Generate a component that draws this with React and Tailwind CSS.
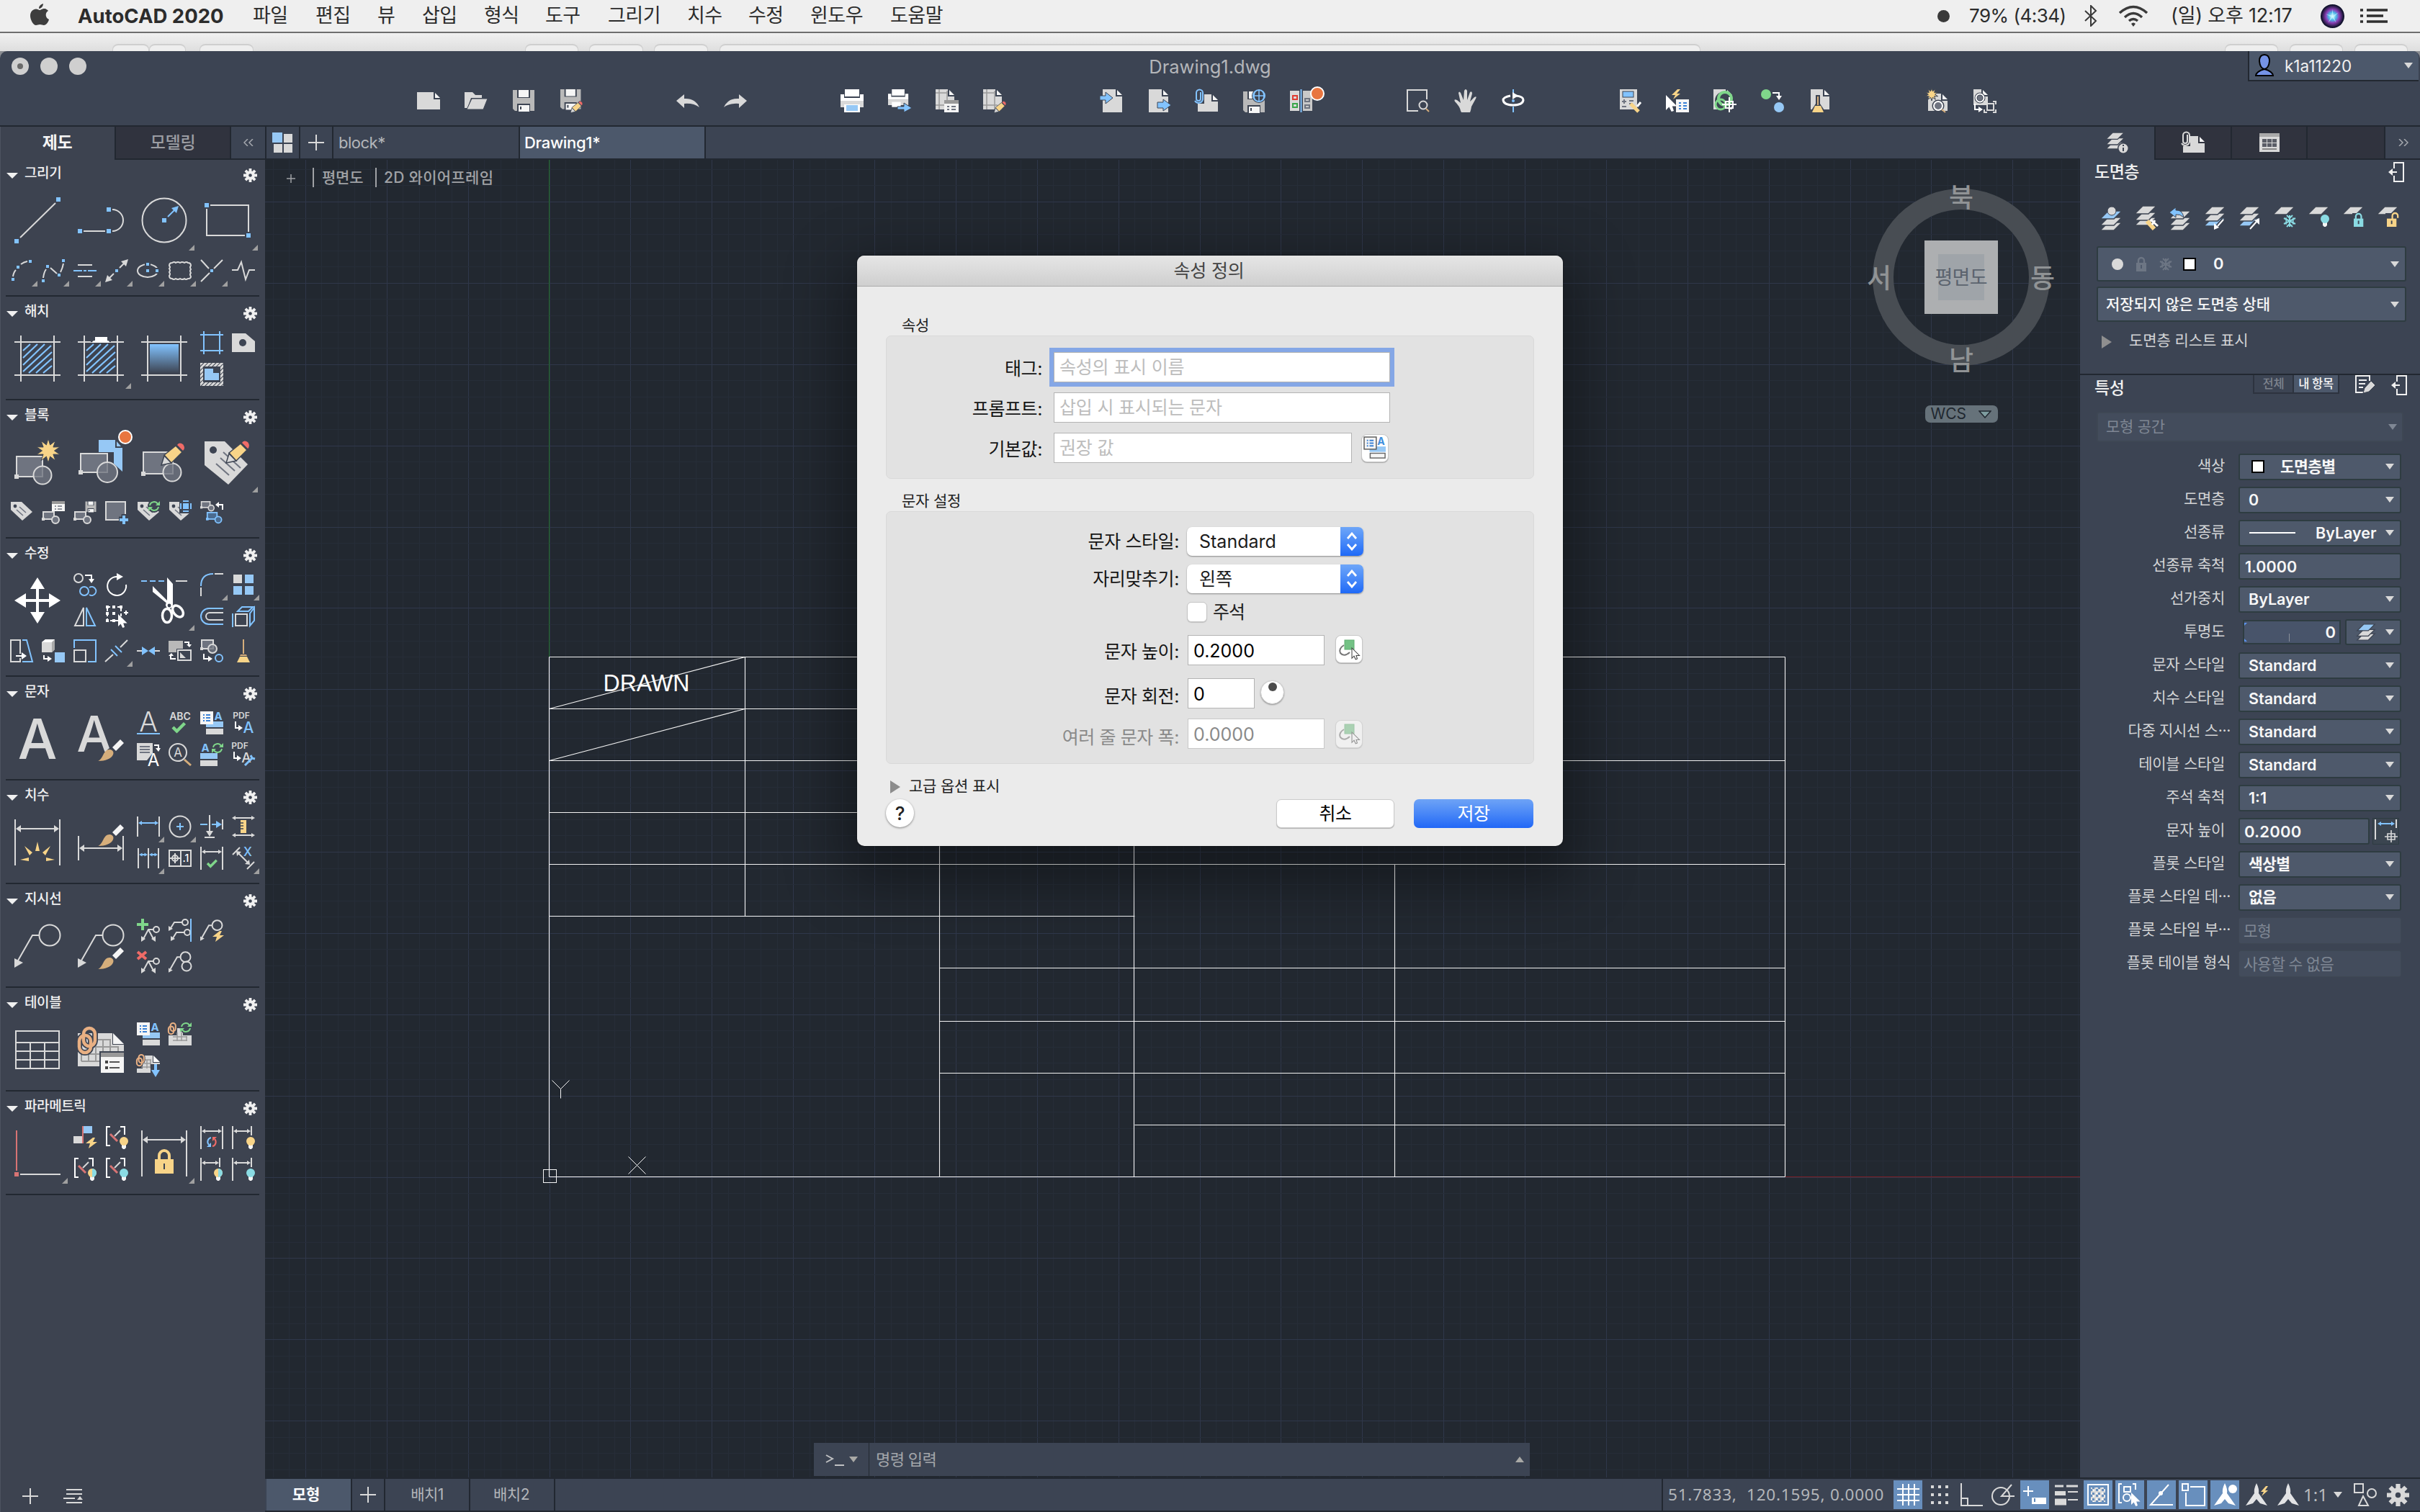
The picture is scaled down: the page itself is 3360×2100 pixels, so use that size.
import React from "react";

const W = "#d9d9d9";
const B = "#82c3ff";
const F = "#96c8f5";
const Y = "#f8d488";
const T = "#d6ae7b";
const G = "#7fd68a";
const R = "#ef6b67";
const P = "#6f7480";
const D = "#3d4452";
const C = "#8adbe3";
const O = "#e9b083";

/* ---------- icon primitives ---------- */
const S = ({ children, className = "size-8", sw = 2, vb = "0 0 32 32" }) => (
  <svg viewBox={vb} className={`${className} block shrink-0 overflow-visible`} fill="none" stroke={W} strokeWidth={sw}>
    {children}
  </svg>
);
const L = ({ children }) => (
  <S className="size-16" vb="0 0 64 64">{children}</S>
);
const Dot = ({ x, y, s = 4, c = B }) => <rect x={x - s / 2} y={y - s / 2} width={s} height={s} fill={c} stroke="none" />;
const A = ({ x, y, s = 20, c = W, w = 400, t = "A" }) => (
  <text x={x} y={y} fontSize={s} fill={c} stroke="none" fontWeight={w} textAnchor="middle" fontFamily="Inter, sans-serif">{t}</text>
);
const Brush = ({ x = 28, y = 32 }) => (
  <g transform={`translate(${x} ${y})`} stroke="none">
    <path d="M0 31C8 28 7 14 17 15C26 17 22 31 0 31Z" fill={T} />
    <path d="M20 12L31 1L36 6L25 17Z" fill="#f5f5f5" />
  </g>
);
const Pencil = ({ x = 0, y = 0, k = 1 }) => (
  <g transform={`translate(${x} ${y}) scale(${k})`} stroke={D} strokeWidth="1.5">
    <path d="M0 32L4 19L14 29Z" fill={W} />
    <path d="M4 18L20 5L29 14L14 29Z" fill={Y} />
    <path d="M21 4Q25 -2 31 3Q35 9 30 13Z" fill={R} />
  </g>
);
const Bulb = ({ x, y, c = Y, half }) => (
  <g stroke="none">
    <path d={`M${x - 3} ${y + 5}h6v4l-2 2h-2l-2-2z`} fill="#f5f5f5" />
    <circle cx={x} cy={y} r="6" fill={c} />
    {half && <path d={`M${x} ${y - 6}a6 6 0 0 1 0 12z`} fill={half} />}
  </g>
);
const Refresh = ({ x, y, r = 6, a = G, b = G }) => (
  <g strokeWidth="2">
    <path d={`M${x - r} ${y - 1}A${r} ${r} 0 0 1 ${x + r - 1} ${y - 3}`} stroke={a} />
    <path d={`M${x + r} ${y + 1}A${r} ${r} 0 0 1 ${x - r + 1} ${y + 3}`} stroke={b} />
    <path d={`M${x + r + 2} ${y - 7}v6h-6z`} fill={a} stroke="none" />
    <path d={`M${x - r - 2} ${y + 7}v-6h6z`} fill={b} stroke="none" />
  </g>
);
/* pair of vertical half-turn arrows, left one and right one in their own colours */
const Swap = ({ x, y }) => (
  <g strokeWidth="2">
    <path d={`M${x - 1} ${y - 6}A6 6 0 0 0 ${x - 4} ${y + 4}`} stroke={B} />
    <path d={`M${x + 1} ${y + 6}A6 6 0 0 0 ${x + 4} ${y - 4}`} stroke={R} />
    <path d={`M${x - 7} ${y + 7}h6v-6z`} fill={B} stroke="none" />
    <path d={`M${x + 7} ${y - 7}h-6v6z`} fill={R} stroke="none" />
  </g>
);
const HArrow = ({ x1, x2, y, c = W, s = 4 }) => (
  <g>
    <path d={`M${x1 + s} ${y}H${x2 - s}`} stroke={c} />
    <path d={`M${x1} ${y}l${s + 2} ${-s}v${2 * s}zM${x2} ${y}l${-s - 2} ${-s}v${2 * s}z`} fill={c} stroke="none" />
  </g>
);
const Check = ({ x, y, k = 1 }) => <path d={`M${x} ${y}l${5 * k} ${5 * k}l${10 * k} ${-10 * k}`} stroke={G} strokeWidth={4 * k} />;
const Bolt = ({ x, y }) => <path d={`M${x + 10} ${y}l-10 8h6l-2 7l12-9h-6l3-6z`} fill={Y} stroke="none" />;
const BlockShape = ({ x = 0, y = 0, c = W, f = P }) => (
  <g transform={`translate(${x} ${y})`} stroke={c}>
    <rect x="2" y="1" width="15" height="10" fill={f} />
    <circle cx="19" cy="12" r="5" fill={f} />
    <Dot x={2} y={11} c={c} />
  </g>
);
const Tag = ({ lines = true }) => (
  <g>
    <path d="M1 1H16L31 15L17 27L1 12Z" fill={W} stroke="none" />
    <circle cx="7" cy="7" r="2.4" fill={D} stroke="none" />
    {lines && <path d="M13 8l9 8M9 12l9 8" stroke={P} strokeWidth="1.6" />}
  </g>
);
const Floppy = ({ x = 0, y = 0, k = 1 }) => (
  <g transform={`translate(${x} ${y}) scale(${k})`} stroke="none">
    <path d="M1 1H31V30H4L1 27Z" fill="#b9b9b9" />
    <rect x="7" y="0" width="18" height="12" fill={D} />
    <rect x="9" y="1" width="14" height="10" fill="#f5f5f5" />
    <rect x="7" y="20" width="18" height="11" fill={D} />
    <rect x="9" y="22" width="15" height="9" fill="#f5f5f5" />
    <rect x="11" y="24" width="2" height="4" fill={D} />
  </g>
);
const Star = ({ x, y, r }) => {
  const pts = Array.from({ length: 20 }, (_, i) => {
    const q = i % 2 ? r * 0.5 : r;
    const t = (i * Math.PI) / 10 - Math.PI / 2;
    return `${(x + q * Math.cos(t)).toFixed(1)},${(y + q * Math.sin(t)).toFixed(1)}`;
  }).join(" ");
  return <polygon points={pts} fill={Y} stroke={D} strokeWidth="1" />;
};
const Sheet = ({ x = 2, y = 0, w = 26, h = 32, c = W }) => (
  <g stroke="none">
    <path d={`M${x} ${y}h${w - 9}v10h9v${h - 10}h${-w}z`} fill={c} />
    <path d={`M${x + w - 7} ${y + 1}l7 7h-7z`} fill="#f5f5f5" />
  </g>
);
const Clip = ({ x, y, k = 1, c = W }) => (
  <path transform={`translate(${x} ${y}) scale(${k})`} d="M9 4V13a3 3 0 0 1-6 0V5a4 4 0 0 1 9 0V14a6 6 0 0 1-11 2" stroke={c} strokeWidth="2" />
);
const Chain = ({ x = 0, y = 0, k = 1 }) => {
  const links = (
    <>
      <rect x="8" y="2" width="16" height="25" rx="8" />
      <rect x="2" y="12" width="16" height="24" rx="8" />
    </>
  );
  return (
    <g transform={`translate(${x} ${y}) scale(${k})`}>
      <g stroke={D} strokeWidth="8">{links}</g>
      <g stroke={O} strokeWidth="4.5">{links}</g>
    </g>
  );
};
const ListField = ({ d }) => (
  <g stroke="none">
    <rect x="8" y="14" width="24" height="8" fill={F} />
    <rect x="8" y="24" width="24" height="8" fill={W} />
    <rect x="0" y="0" width="18" height="18" fill="#f5f5f5" stroke={d || D} strokeWidth={d ? 1.5 : 0} />
    <path d="M4 5h2M4 9h2M4 13h2M8 5h6M8 9h6M8 13h6" stroke="#3b82d6" strokeWidth="2" />
    <A x={25} y={12} s={15} c={d ? "#3f8fdd" : B} w={700} />
  </g>
);
const Leader = ({ x = 0, y = 0, k = 1 }) => (
  <g transform={`translate(${x} ${y}) scale(${k})`} strokeWidth={2 / k}>
    <circle cx="49" cy="17" r="14.5" />
    <path d="M34 17H25L5 52" />
    <path d="M0 49V62L12 55Z" fill={W} stroke="none" />
  </g>
);
const MiniLeader = ({ x = 0, y = 0 }) => (
  <g transform={`translate(${x} ${y})`}>
    <circle cx="23" cy="5" r="4" />
    <path d="M19 5H8L3 13" />
    <path d="M0 17V10L6 14Z" fill={W} stroke="none" />
  </g>
);
const TwoLeader = () => (
  <g>
    <circle cx="27" cy="15" r="4" />
    <path d="M23 15H16L9 28M16 15L23 28" />
    <path d="M6 32v-8l6 4zM26 32v-8l-6 4z" fill={W} stroke="none" />
  </g>
);
const Constraint = () => (
  <g>
    <path d="M7 1H2V27H7M21 1H27V12" stroke="#fff" />
    <path d="M7 11L17 21" stroke="#d87474" strokeWidth="3" />
    <path d="M13 14L21 6" />
  </g>
);
const Layer = ({ x = 0, y = 0, c = W }) => <path d={`M${x + 11} ${y}h19l-11 11h-19z`} fill={c} stroke={D} strokeWidth="1.5" />;
const Stack = ({ a = W, b = W, c = W, y = 0 }) => (
  <g>
    <Layer y={y + 16} c={c} />
    <Layer y={y + 9} c={b} />
    <Layer y={y} c={a} />
  </g>
);
const Lock = ({ x, y, c, open, k = 1, d = D }) => (
  <g transform={`translate(${x} ${y}) scale(${k})`}>
    <path d={open ? "M8 9V4a4 4 0 0 1 8 0v3" : "M3 9V5a4 4 0 0 1 8 0v4"} stroke={c} strokeWidth="2.4" />
    <rect x="0" y="8" width="14" height="12" fill={c} stroke="none" />
    <path d="M7 11v5" stroke={d} strokeWidth="2" />
  </g>
);
const Snow = ({ x, y, c, r = 8 }) => (
  <g stroke={c} strokeWidth="2">
    <path d={`M${x} ${y - r}v${2 * r}M${x - r} ${y - r / 2}l${r * 2} ${r}M${x - r} ${y + r / 2}l${r * 2} ${-r}`} />
    <path d={`M${x - r / 2} ${y - r}l${r / 2} ${r / 2}l${r / 2} ${-r / 2}M${x - r / 2} ${y + r}l${r / 2} ${-r / 2}l${r / 2} ${r / 2}`} />
    <path d={`M${x - r * 0.6} ${y - r * 0.6}v${r * 1.2}M${x + r * 0.6} ${y - r * 0.6}v${r * 1.2}`} strokeWidth="1.500" />
  </g>
);
const Cursor = ({ x, y, c = "#fff", s = "none", k = 1 }) => (
  <path transform={`translate(${x} ${y}) scale(${k})`} d="M0 0V19L4 15L7 21L10 20L8 14H14Z" fill={c} stroke={s} strokeWidth="1.4" />
);
const Caret = ({ c = "#d9d9d9" }) => (
  <svg viewBox="0 0 12 8" className="block h-[8px] w-[12px] shrink-0"><path d="M0 0H12L6 8Z" fill={c} /></svg>
);
const Gear = ({ className = "size-[19px]", c = "#f0f0f0", bg = D }) => (
  <svg viewBox="0 0 20 20" className={`${className} block shrink-0`}>
    <g stroke={c} strokeWidth="4">
      <path d="M10 0V20M0 10H20M3 3L17 17M17 3L3 17" />
    </g>
    <circle cx="10" cy="10" r="6.6" fill={c} />
    <circle cx="10" cy="10" r="2.4" fill={bg} />
  </svg>
);
const Badge = ({ x, y, r = 9 }) => <circle cx={x} cy={y} r={r} fill="#e8753f" stroke="#fff" strokeWidth="2" />;
const Frame = () => <path d="M9 0V64M55 0V64M0 9H64M0 55H64" />;
const HatchLines = () => (
  <g stroke={B} strokeWidth="2.2">
    <path d="M12 21L22 12M12 31L32 12M12 41L42 12M12 50L51 14M20 52L52 23M30 52L52 32M40 52L52 42" />
  </g>
);
const Dim = ({ c = W, x2 = 31 }) => (
  <g>
    <path d={`M1 0V32M${x2} 0V${x2 > 28 ? 32 : 13}`} />
    <HArrow x1={2} x2={x2 - 1} y={7} c={c} s={3} />
  </g>
);

/* ---------- left tool palette ---------- */
const sections = [
  {
    title: "그리기", tall: true,
    icons: [
      { big: 1, el: <L><path d="M8 56L57 8" /><Dot x={3} y={61} s={6} /><Dot x={61} y={3} s={6} /></L> },
      { big: 1, el: <L><path d="M8 47H38M48 17A15 15 0 0 1 48 47" /><Dot x={3} y={47} s={6} /><Dot x={43} y={47} s={6} /><Dot x={43} y={17} s={6} /></L> },
      { big: 1, fly: 1, el: <L><circle cx="32" cy="32" r="30.5" /><Dot x={32} y={32} s={6} /><path d="M37 27L47 17" stroke={B} /><path d="M52 12L42 15L49 22Z" fill={B} stroke="none" /></L> },
      { big: 1, fly: 1, el: <L><path d="M8 11H61V48M56 53H3V16" /><Dot x={3} y={11} s={6} /><Dot x={61} y={53} s={6} /></L> },
      { fly: 1, el: <S><path d="M4 24Q5 18 8 15M15 7Q19 4 24 3" /><Dot x={4} y={28} /><Dot x={11} y={11} /><Dot x={28} y={3} /></S> },
      { fly: 1, el: <S><path d="M2 26Q3 18 6 14M12 12L21 20M26 18Q29 12 30 6" /><Dot x={2} y={30} /><Dot x={8} y={10} /><Dot x={24} y={22} /><Dot x={30} y={2} /></S> },
      { fly: 1, el: <S><path d="M6 8H26M6 24H26" /><path d="M0 16H12M14 16H18M20 16H32" stroke={B} /></S> },
      { fly: 1, el: <S><path d="M4 28L12 20M20 12L28 4" /><path d="M32 0L22 3L29 10ZM0 32L3 22L10 29Z" fill={W} stroke="none" /><Dot x={16} y={16} /></S> },
      { fly: 1, el: <S><ellipse cx="15" cy="16" rx="14" ry="9" /><rect x="11" y="3" width="8" height="8" fill={D} stroke="none" /><rect x="24" y="12" width="8" height="8" fill={D} stroke="none" /><Dot x={15} y={7} /><Dot x={15} y={16} /><Dot x={28} y={16} /></S> },
      { fly: 1, el: <S><path d="M5 5q3-2 5 0q3-2 6 0q3-2 6 0q3-2 5 0q4 0 4 4q-2 2 0 5q-2 2 0 5q-2 2 0 5q0 3-4 3q-3 2-5 0q-3 2-6 0q-3 2-6 0q-3 2-5 0q-4 0-4-4q2-2 0-5q2-2 0-5q2-2 0-4q0-4 4-4Z" /></S> },
      { fly: 1, el: <S><path d="M1 1L12 13M31 1L19 13M13 19L1 31" /><Dot x={16} y={16} /></S> },
      { el: <S><path d="M0 15H8L13 4L19 28L24 15H32" /></S> },
    ],
  },
  {
    title: "해치",
    icons: [
      { big: 1, el: <L><Frame /><HatchLines /></L> },
      { big: 1, fly: 1, el: <L><Frame /><HatchLines /><path d="M18 4V2H46V9H18Z" fill={D} stroke="none" /><path d="M24 2H41V7Q44 7 44 10H20Q20 7 24 7Z" fill="#fff" stroke="none" /></L> },
      { big: 1, el: <L><defs><linearGradient id="grad" x1="0" y1="0" x2="0" y2="1"><stop offset="0" stopColor={B} /><stop offset="1" stopColor={D} /></linearGradient></defs><Frame /><rect x="12" y="12" width="40" height="40" fill="url(#grad)" stroke="none" /></L> },
      { el: <S><path d="M5 0V32M27 0V32M0 5H32M0 27H32" stroke={B} /></S> },
      { el: <S><path d="M0 3H19L32 14V29H0Z" fill={W} stroke="none" /><circle cx="15" cy="16" r="5" fill={D} stroke="none" /></S> },
      { el: <S><defs><pattern id="hp" width="4" height="4" patternUnits="userSpaceOnUse" patternTransform="rotate(45)"><rect width="2" height="4" fill={W} /></pattern></defs><rect width="32" height="32" fill="url(#hp)" stroke="none" /><rect x="4" y="5" width="24" height="22" fill={D} stroke="none" /><path d="M6 8H18V14H26V24H6Z" fill={F} stroke="none" /></S> },
    ],
  },
  {
    title: "블록", tall: true,
    icons: [
      { big: 1, el: <L><rect x="3" y="24" width="36" height="28" fill={P} /><circle cx="39" cy="50" r="12.5" fill={P} fillOpacity=".8" /><Dot x={3} y={52} s={6} c={W} /><Star x={47} y={16} r={17} /></L> },
      { big: 1, el: <L><path d="M29 1H52V12H62V45L50 34V18H29Z" fill={F} stroke="none" /><path d="M54 3L60 10H54Z" fill={F} stroke="none" /><rect x="4" y="20" width="37" height="26" fill={P} /><circle cx="41" cy="46" r="14" fill={P} fillOpacity=".8" /><Dot x={4} y={46} s={6} c={W} /><Badge x={66} y={-3} /></L> },
      { big: 1, el: <L><rect x="3" y="18" width="41" height="30" fill={P} /><circle cx="43" cy="46" r="12.5" fill={P} fillOpacity=".8" /><Dot x={3} y={48} s={6} c={W} /><Pencil x={28} y={4} /></L> },
      { big: 1, fly: 1, el: <L><path d="M0 3H28L60 35L33 63L0 36Z" fill={W} stroke="none" /><circle cx="12" cy="15" r="5" fill={D} stroke="none" /><path d="M26 18L50 40M22 26L42 44M16 34L34 50" stroke={P} /><Pencil x={30} y={1} /></L> },
      { el: <S><Tag /></S> },
      { el: <S><BlockShape x={0} y={14} /><rect x="14" y="0" width="18" height="14" fill="#f5f5f5" stroke="none" /><rect x="14" y="0" width="18" height="4" fill="#999" stroke="none" /><path d="M18 7h2M22 7h6M18 11h2M22 11h6" stroke={P} strokeWidth="1.6" /></S> },
      { el: <S><BlockShape x={0} y={14} /><Floppy x={16} y={0} k={0.5} /></S> },
      { el: <S><rect x="1" y="1" width="27" height="25" fill={P} /><path d="M26 18v14M19 25h14" stroke={D} strokeWidth="7" /><path d="M26 20v12M20 26h12" stroke={B} strokeWidth="4" /></S> },
      { el: <S><Tag /><circle cx="24" cy="7" r="9" fill={D} stroke="none" /><Refresh x={24} y={7} r={6} /></S> },
      { el: <S><Tag /><rect x="15" y="0" width="18" height="17" fill={D} stroke="none" /><rect x="20" y="3" width="8" height="8" fill={B} stroke="none" /><path d="M17 3v8M31 3v8M20 0h8M20 14h8" stroke={B} /></S> },
      { el: <S><g transform="scale(.8)"><BlockShape /></g><g transform="translate(8 15) scale(.9)"><BlockShape c={B} f="#4a6b90" /></g><path d="M31 12V5H25" stroke="#fff" /><path d="M21 5l5-4v8z" fill="#fff" stroke="none" /></S> },
    ],
  },
  {
    title: "수정", tall: true,
    icons: [
      { big: 1, el: <L><path d="M32 8V56M8 32H56" stroke="#fff" strokeWidth="4" /><path d="M32 0L42 16H22ZM32 64L42 48H22ZM0 32L16 22V42ZM64 32L48 22V42Z" fill="#fff" stroke="none" /></L> },
      { el: <S><circle cx="7" cy="7" r="6" /><circle cx="15" cy="25" r="6" stroke={B} /><path d="M22 20A6 6 0 1 1 22 30" stroke={B} /><path d="M16 3H25V9" stroke="#fff" /><path d="M21 8h8l-4 6z" fill="#fff" stroke="none" /></S> },
      { el: <S><path d="M29 16A13 13 0 1 1 17 5" stroke="#fff" /><path d="M16 0L25 5L16 10Z" fill="#fff" stroke="none" /></S> },
      { big: 1, fly: 1, el: <L><path d="M0 5H8M12 5H20M24 5H32" stroke={B} /><path d="M48 5H64" /><path d="M36 0L44 9V38H38L16 20V12L36 32Z" fill="#fff" stroke="none" /><circle cx="39" cy="38" r="5" fill="#fff" stroke="none" /><ellipse cx="36" cy="53" rx="6.5" ry="9.5" stroke="#fff" strokeWidth="3.5" /><ellipse cx="51" cy="47" rx="6" ry="9" transform="rotate(-40 51 47)" stroke="#fff" strokeWidth="3.5" /><circle cx="39" cy="39" r="2.4" fill={D} stroke="none" /></L> },
      { fly: 1, el: <S><path d="M1 18Q1 1 18 1" stroke={B} /><path d="M20 1H32M1 20V32" /></S> },
      { fly: 1, el: <S><Dot x={8} y={8} s={12} c={W} /><Dot x={24} y={8} s={12} c={F} /><Dot x={8} y={24} s={12} c={F} /><Dot x={24} y={24} s={12} c={F} /></S> },
      { el: <S><path d="M14 4V29H2Z" /><path d="M18 4L30 29H18Z" stroke={B} /></S> },
      { el: <S><rect x="3" y="3" width="19" height="19" strokeDasharray="4 3" stroke="#fff" />{[3, 12, 22].map((i) => <g key={i}><Dot x={i} y={3} c="#fff" /><Dot x={i} y={22} c="#fff" /></g>)}<Dot x={3} y={12} c="#fff" /><Dot x={12} y={12} c="#fff" /><path d="M26 11h6M29 8v6" stroke="#fff" /><Cursor x={18} y={13} k={0.9} /></S> },
      { el: <S><path d="M32 5H12A11 11 0 0 0 12 27H32" stroke={B} /><path d="M32 11H13A5 5 0 0 0 13 21H32" /></S> },
      { el: <S><rect x="5" y="13" width="16" height="16" /><path d="M1 12V31M8 9L14 3H29L23 9ZM25 12L31 4V22L25 29Z" stroke={B} /></S> },
      { el: <S><path d="M14 20V1H1V31H14V26" /><path d="M17 1H23L31 31H17" stroke={B} /><path d="M8 23H17" stroke="#fff" /><path d="M16 18l7 5-7 5z" fill="#fff" stroke="none" /></S> },
      { el: <S><path d="M0 4L5 0H18V14L14 18H0Z" fill={W} stroke="none" /><path d="M0 4L5 0H18L14 4Z" fill="#fff" stroke="none" /><path d="M14 18V4L18 0V14Z" fill="#aaa" stroke="none" /><Dot x={25} y={25} s={14} c={F} /><path d="M3 22V27H9" stroke="#fff" /><path d="M8 23l6 4-6 4z" fill="#fff" stroke="none" /></S> },
      { el: <S><path d="M1 12V1H31V31H20" stroke={B} /><rect x="1" y="15" width="16" height="16" /></S> },
      { fly: 1, el: <S><path d="M0 31L11 21M21 11L31 1" /><path d="M8 14L17 23M14 9L23 18" stroke={B} /></S> },
      { el: <S><path d="M0 16H8M24 16H32" /><path d="M7 10V22L16 16ZM25 10V22L16 16Z" fill={B} stroke="none" /></S> },
      { el: <S><rect x="0" y="2" width="20" height="16" fill="#b9b9b9" stroke="none" /><rect x="11" y="13" width="22" height="18" fill={D} stroke="none" /><rect x="13" y="15" width="18" height="14" /><path d="M16 18V26H24Z" fill={W} stroke="none" /><path d="M22 4H28V7M10 27H3V23" stroke="#fff" /><path d="M25 7h7l-3 4zM0 23h7l-3-4z" fill="#fff" stroke="none" /></S> },
      { el: <S><rect x="2" y="1" width="16" height="12" fill={P} /><circle cx="17" cy="13" r="6" fill={P} fillOpacity=".8" /><Dot x={2} y={13} c={W} /><circle cx="26" cy="26" r="5" stroke={B} /><path d="M5 20V27H12" stroke="#fff" /><path d="M11 23l6 4-6 4z" fill="#fff" stroke="none" /></S> },
      { el: <S><path d="M16 0V20" stroke={T} /><path d="M12 21H20L21 23H11Z" fill={T} stroke="none" /><path d="M11 24H21L25 32H7Z" fill={Y} stroke="none" /></S> },
    ],
  },
  {
    title: "문자",
    icons: [
      { big: 1, el: <L><A x={32} y={60} s={77} w={500} /></L> },
      { big: 1, el: <L><A x={23} y={50} s={69} w={500} /><circle cx="48" cy="53" r="9" fill={D} stroke="none" /><Brush x={28} y={32} /></L> },
      { el: <S><A x={16} y={28} s={38} w={300} /><path d="M0 31H32" stroke={B} /></S> },
      { el: <S><A x={16} y={12} s={14} w={600} t="ABC" /><Check x={6} y={22} k={1.1} /></S> },
      { el: <S><ListField /></S> },
      { el: <S><A x={13} y={10} s={12} w={600} t="PDF" /><path d="M5 14V23H10" stroke="#fff" /><path d="M9 19l6 4-6 4z" fill="#fff" stroke="none" /><A x={23} y={30} s={21} c={B} w={500} /></S> },
      { el: <S><path d="M0 0H22V14L14 24H0Z" fill={W} stroke="none" /><path d="M4 5H18M4 9H18M4 13H18" stroke={P} /><path d="M24 3H30V7" stroke="#fff" /><path d="M26 7h7l-3 5z" fill="#fff" stroke="none" /><A x={23} y={32} s={24} c="#fff" /></S> },
      { el: <S><path d="M22 23L31 31" stroke={T} strokeWidth="3" /><circle cx="13" cy="13" r="12" /><A x={13} y={19} s={17} /></S> },
      { el: <S><rect x="0" y="14" width="24" height="8" fill={F} stroke="none" /><rect x="0" y="24" width="24" height="8" fill={W} stroke="none" /><A x={7} y={12} s={15} c={B} w={700} /><Refresh x={24} y={7} r={6} /></S> },
      { el: <S><A x={11} y={8} s={12} w={600} t="PDF" /><path d="M3 12V21H8" stroke="#fff" /><path d="M7 17l6 4-6 4z" fill="#fff" stroke="none" /><A x={20} y={27} s={19} w={500} /><path d="M18 31L28 21M26 17l2 4l4 1" stroke={B} strokeWidth="3" /></S> },
    ],
  },
  {
    title: "치수",
    icons: [
      { big: 1, el: <L><path d="M1 0V64M63 0V64" /><HArrow x1={2} x2={62} y={13} s={5} /><g fill={Y} stroke="none"><path d="M32 31L35 44H29ZM14 37L25 46L21 50ZM50 37L39 46L43 50ZM8 56L20 53V58ZM56 56L44 53V58Z" /></g></L> },
      { big: 1, el: <L><path d="M1 23V57M63 23V57" /><HArrow x1={2} x2={62} y={40} s={5} /><Brush x={28} y={6} /></L> },
      { fly: 1, el: <S><path d="M1 2V30M31 2V30" /><HArrow x1={2} x2={30} y={11} c={B} s={3} /></S> },
      { fly: 1, el: <S><circle cx="16" cy="16" r="14.5" /><path d="M11 16H21M16 11V21" stroke={B} /></S> },
      { el: <S><path d="M13 0V24M6 31H20" /><path d="M8 22h10l-5 8z" fill={W} stroke="none" /><path d="M0 13H10M16 13H24" stroke={B} /><path d="M22 8l8 5-8 5z" fill={B} stroke="none" /><path d="M31 6V20" /></S> },
      { el: <S><HArrow x1={0} x2={32} y={4} s={3} /><HArrow x1={0} x2={32} y={28} s={3} /><rect x="12" y="7" width="8" height="18" fill={Y} stroke="none" /><path d="M12 11h4M12 15h4M12 19h4" stroke={D} strokeWidth="1.5" /></S> },
      { fly: 1, el: <S><path d="M2 2V30M16 2V30M30 2V30" /><HArrow x1={3} x2={15} y={11} c={B} s={2.5} /><HArrow x1={17} x2={29} y={11} c={B} s={2.5} /></S> },
      { el: <S><rect x="1" y="5" width="30" height="22" /><path d="M17 5V27M2 16H16M9 9V23" /><circle cx="9" cy="16" r="4" /><A x={24} y={21} s={14} c="#fff" w={500} t=".1" /></S> },
      { el: <S><Dim /><Check x={10} y={23} k={0.85} /></S> },
      { fly: 1, el: <S><path d="M1 11L11 1M21 31L31 21M8 8L22 22" /><path d="M6 6l7 1-6 6zM25 25l-7-1 6-6z" fill={W} stroke="none" /><A x={22} y={13} s={17} c={B} w={500} t="X" /></S> },
    ],
  },
  {
    title: "지시선",
    icons: [
      { big: 1, el: <L><Leader /></L> },
      { big: 1, el: <L><Leader /><circle cx="50" cy="44" r="6" fill={D} stroke="none" /><Brush x={28} y={33} /></L> },
      { el: <S><path d="M0 8H16M8 0V16" stroke={G} strokeWidth="4" /><TwoLeader /></S> },
      { el: <S><MiniLeader /><MiniLeader x={3} y={14} /><path d="M31 0V32" stroke={B} /></S> },
      { el: <S><Leader k={0.48} y={1} /><Bolt x={17} y={17} /></S> },
      { at: "col-start-5 row-start-2", el: <S><path d="M1 2L13 12M13 2L1 12" stroke={R} strokeWidth="4" /><TwoLeader /></S> },
      { at: "col-start-6 row-start-2", el: <S><Leader k={0.48} y={1} /><circle cx="25" cy="22" r="6.500" /></S> },
    ],
  },
  {
    title: "테이블",
    icons: [
      { big: 1, el: <L><path d="M2 6H62V58H2ZM2 22H62M2 34H62M2 46H62M22 22V58M42 22V58" /></L> },
      { big: 1, el: <L><path d="M0 9H48V25H64V55H0Z" fill={W} stroke="none" /><path d="M49 9L64 24H49Z" fill="#f5f5f5" stroke="none" /><path d="M25 18H45V28M15 28H56V36M5 38H30M5 48H30M5 38V48M15 28V48M25 18V48M35 18V36M45 28V36" stroke="#999" /><rect x="30" y="34" width="36" height="32" fill={D} stroke="none" /><rect x="32" y="36" width="32" height="28" fill="#f5f5f5" stroke="none" /><rect x="32" y="36" width="32" height="6" fill="#999" stroke="none" /><path d="M38 49h4M38 57h4" stroke="#444" strokeWidth="4" /><path d="M44 49H58M44 57H58" stroke="#555" /><Chain /></L> },
      { el: <S><ListField /></S> },
      { el: <S><path d="M0 18H12V8H20V18H32V32H0Z" fill={W} stroke="none" /><path d="M6 20H26M6 25H26M12 14V26M18 14V26M25 19V26" stroke="#999" strokeWidth="1.5" /><circle cx="24" cy="7" r="8.5" fill={D} stroke="none" /><Chain x={-1} k={0.45} /><Refresh x={24} y={7} r={6} /></S> },
      { at: "col-start-5 row-start-2", el: <S><path d="M0 20H8V2H22V12H32V26H0Z" fill={W} stroke="none" /><path d="M23 2L32 11H23Z" fill="#fff" stroke="none" /><path d="M10 8H20M10 13H20M6 18H20M14 8V20M19 8V20" stroke="#999" strokeWidth="1.5" /><path d="M19 14H33V30H19Z" fill={D} stroke="none" /><path d="M24 14H28V22H32L26 32L20 22H24Z" fill={B} stroke="none" /><Chain x={-1} k={0.45} /></S> },
    ],
  },
  {
    title: "파라메트릭",
    icons: [
      { big: 1, fly: 1, el: <L><path d="M3 0V56" stroke="#d87474" /><Dot x={3} y={61} s={6} c="#d87474" /><path d="M8 61H64" /></L> },
      { el: <S><rect x="13" y="0" width="13" height="10" fill={F} stroke="none" /><rect x="0" y="14" width="12" height="10" fill={W} stroke="none" /><path d="M13 0V24" stroke="#d87474" /><Bolt x={17} y={16} /></S> },
      { el: <S><Constraint /><Bulb x={26} y={21} /></S> },
      { big: 1, fly: 1, el: <L><path d="M1 0V64M63 0V64" /><HArrow x1={2} x2={62} y={13} s={5} /><path d="M25 42V35A7 7 0 0 1 39 35V42" stroke={Y} strokeWidth="4" /><rect x="19" y="40" width="26" height="20" fill={Y} stroke="none" /><path d="M32 46V54" stroke={D} /></L> },
      { el: <S><Dim /><Swap x={16} y={22} /></S> },
      { el: <S><Dim x2={27} /><Bulb x={26} y={21} /></S> },
      { el: <S><Constraint /><Bulb x={26} y={21} half={C} /></S> },
      { el: <S><Constraint /><Bulb x={26} y={21} c={C} /></S> },
      { el: <S><Dim x2={27} /><Bulb x={25} y={21} half={C} /></S> },
      { el: <S><Dim x2={27} /><Bulb x={26} y={21} c={C} /></S> },
    ],
  },
];

const Fly = ({ big, low }) => (
  <svg viewBox="0 0 8 8" className={`absolute size-2 ${big ? "bottom-[2px] right-[2px]" : low ? "bottom-[4px] right-0" : "bottom-0 right-0"}`}>
    <path d="M8 0V8H0Z" fill="#a0a0a0" />
  </svg>
);

function Section({ s }) {
  let used = 0;
  return (
    <section className={`flex flex-col ${s.tall ? "h-[192px]" : "h-[144px]"}`}>
      <header className="flex h-[42px] shrink-0 items-center pl-[9px] pr-[11px]">
        <svg viewBox="0 0 16 8" className="mt-[6px] h-2 w-4"><path d="M0 0H16L8 8Z" fill="#f0f0f0" /></svg>
        <h3 className="ml-[9px] flex-1 text-[19px] font-medium leading-[24px] tracking-[-0.4px] text-[#f0f0f0]">{s.title}</h3>
        <Gear className="mt-[5px] size-[19px]" />
      </header>
      <div className="grid grid-flow-row-dense auto-rows-[44px] grid-cols-[repeat(8,44px)] pl-2">
        {s.icons.map((ic, i) => {
          const low = s.tall && !ic.big && used >= 16;
          used += ic.big ? 4 : 1;
          return (
            <div
              key={i}
              className={`relative flex items-center justify-center ${ic.at || ""} ${ic.big ? "col-span-2 row-span-2" : low ? "h-[52px]" : ""}`}
            >
              {ic.el}
              {ic.fly && <Fly big={ic.big} low={low} />}
            </div>
          );
        })}
      </div>
      <div className="mx-2 mt-auto h-[2px] shrink-0 bg-[#222831]" />
    </section>
  );
}

function LeftPanel() {
  return (
    <aside className="flex w-[368px] shrink-0 flex-col bg-[#3d4350] shadow-[inset_1px_0_0_#4d5360]">
      <div className="flex h-[44px] shrink-0 text-[23px] font-medium leading-[44px] tracking-[-0.4px]">
        <div className="w-[159px] text-center font-bold text-[#f5f5f5]">제도</div>
        <div className="h-[46px] w-[162px] border-x-2 border-b-2 border-[#222831] bg-[#30333e] text-center text-[#9b9da3]">모델링</div>
        <div className="flex h-[46px] flex-1 items-center justify-center border-b-2 border-[#222831] bg-[#3c4453]">
          <svg viewBox="0 0 14 10" className="h-[10px] w-[14px]" fill="none" stroke="#a5a8ae" strokeWidth="1.5"><path d="M6 0L1 5L6 10M13 0L8 5L13 10" /></svg>
        </div>
      </div>
      {sections.map((s) => <Section key={s.title} s={s} />)}
      <div className="mt-auto flex h-[44px] items-center gap-[34px] pl-[30px]">
        <S className="size-[24px]" vb="0 0 24 24"><path d="M12 1V23M1 12H23" /></S>
        <S className="h-[20px] w-[27px]" vb="0 0 27 20"><path d="M4 1H26M4 7H26M0 13H16M4 19H26" /><path d="M19 15h8l-4-5z" fill={W} stroke="none" /></S>
      </div>
    </aside>
  );
}

/* ---------- macOS menu bar ---------- */
const menus = [
  ["파일", "w-[87px]"], ["편집", "w-[86px]"], ["뷰", "w-[62px]"], ["삽입", "w-[86px]"], ["형식", "w-[85px]"], ["도구", "w-[87px]"],
  ["그리기", "w-[110px]"], ["치수", "w-[85px]"], ["수정", "w-[86px]"], ["윈도우", "w-[111px]"], ["도움말", "w-[90px]"],
];

function MenuBar() {
  return (
    <div className="flex h-[44px] shrink-0 items-center bg-[#efefef] text-[27px] leading-[44px] text-[#2c2c2c]">
      <svg viewBox="0 0 26 31" className="ml-[42px] mt-[-3px] h-[31px] w-[26px]" fill="#3d3d3d">
        <path d="M18 0C18 4 15 7 12 7C12 3 15 1 18 0ZM13 9C15 9 16 7 20 7C22 7 24 9 25 10C20 13 21 20 26 22C25 26 22 30 19 30C17 30 16 29 13.500 29C11 29 10 30 8 30C4 30 0 22 0 17C0 11 4 7.500 8 7.500C10 7.500 12 9 13 9Z" />
      </svg>
      <div className="ml-[40px] w-[243px] text-[27.500px] font-bold tracking-[0px]">AutoCAD 2020</div>
      {menus.map(([t, w]) => <div key={t} className={`${w} mt-[-1px] tracking-[-0.500px]`}>{t}</div>)}
      <div className="ml-auto flex h-[44px] items-center">
        <div className="size-[17px] rounded-full bg-[#3a3a3a]" />
        <div className="ml-[27px] w-[126px] whitespace-nowrap text-[26px] tracking-[-0.5px]">79% (4:34)</div>
        <svg viewBox="0 0 18 30" className="ml-[34px] h-[30px] w-[18px]" fill="none" stroke="#3a3a3a" strokeWidth="2"><path d="M1 8L16 22L9 29V1L16 8L1 22" /></svg>
        <svg viewBox="0 0 42 30" className="ml-[29px] h-[30px] w-[42px]" fill="none" stroke="#3a3a3a" strokeWidth="3.500"><path d="M2 11Q21 -6 40 11M9 17Q21 6 33 17M15 22Q21 17 27 22" /><path d="M18 26Q21 23 24 26L21 30Z" fill="#3a3a3a" stroke="none" /></svg>
        <div className="ml-[31px] w-[178px] whitespace-nowrap text-[27px] tracking-[-0.200px]">(일) 오후 12:17</div>
        <svg viewBox="0 0 32 32" className="ml-[30px] size-[33px]">
          <defs><radialGradient id="siri"><stop offset="0" stopColor="#dffcff" /><stop offset=".35" stopColor="#4bb6e8" /><stop offset=".6" stopColor="#8a3fb5" /><stop offset="1" stopColor="#10122c" /></radialGradient></defs>
          <circle cx="16" cy="16" r="16" fill="#10122c" /><circle cx="16" cy="16" r="15" fill="url(#siri)" />
          <path d="M16 6L17 15L24 11L18 17L21 25L16 18L10 25L14 17L7 13L15 15Z" fill="#c9fbff" opacity=".6" />
        </svg>
        <svg viewBox="0 0 38 20" className="ml-[22px] mr-[45px] h-[20px] w-[38px]" stroke="#2f2f2f" strokeWidth="3.500"><path d="M0 2H4M9 2H38M0 10H4M9 10H32M0 18H4M9 18H38" /></svg>
      </div>
    </div>
  );
}

function BackWindow() {
  const b = "h-[10px] shrink-0 rounded-t-[8px] border-x border-t-2 border-[#cfcfcf] bg-[#eeeeee]";
  return (
    <div className="flex h-[27px] shrink-0 items-end border-t-2 border-[#6f6f6f] bg-gradient-to-b from-[#f1f1f1] to-[#dedede]">
      <div className={`${b} ml-[156px] w-[51px]`} /><div className={`${b} w-[51px]`} /><div className={`${b} ml-[19px] w-[75px]`} />
      <div className={`${b} ml-[377px] w-[74px]`} /><div className={`${b} ml-[15px] w-[75px]`} /><div className={`${b} ml-[15px] w-[75px]`} />
      <div className={`${b} ml-[16px] w-[1362px]`} />
      <div className={`${b} ml-[728px] w-[74px]`} /><div className={`${b} ml-[16px] w-[74px]`} /><div className={`${b} ml-[16px] w-[74px]`} />
    </div>
  );
}

/* ---------- application title and toolbar ---------- */
const Printer = () => (
  <g stroke="none"><rect x="6" y="0" width="20" height="10" fill="#fff" /><path d="M0 7H5V12H27V7H32V16H0Z" fill="#fff" /><path d="M0 16H32V25H0Z" fill={W} /></g>
);
const Plan = () => (
  <g><Sheet x={0} y={0} w={26} h={28} /><path d="M5 0V28M0 5H16M0 22H20M16 2V28" stroke="#999" strokeWidth="1.500" /></g>
);
const toolGroups = [
  [
    <S><Sheet x={0} y={4} w={32} h={24} /></S>,
    <S><path d="M0 4H11L15 8H24V12H9L4 26H0Z" fill={W} stroke="none" /><path d="M10 13H32L26 28H3Z" fill={W} stroke={D} strokeWidth="1" /></S>,
    <S><Floppy /></S>,
    <S><Floppy k={0.95} y={-1} /><Pencil x={15} y={16} k={0.52} /></S>,
  ],
  [
    <S><path d="M0 16L11 7V13Q26 12 32 25Q24 19 11 20V26Z" fill={W} stroke="none" /></S>,
    <S><path d="M32 16L21 7V13Q6 12 0 25Q8 19 21 20V26Z" fill={W} stroke="none" /></S>,
  ],
  [
    <S><Printer /><rect x="5" y="21" width="22" height="11" fill="#fff" stroke="none" /><rect x="8" y="22" width="16" height="8" fill={F} stroke="none" /></S>,
    <S><g transform="scale(.88)"><Printer /><rect x="6" y="20" width="14" height="8" fill="#fff" stroke="none" /></g><path d="M13 24H22V19L33 26L22 32V28H13Z" fill={B} stroke={D} strokeWidth="1" /></S>,
    <S><Plan /><rect x="12" y="15" width="20" height="17" fill="#f5f5f5" stroke="none" /><rect x="12" y="15" width="20" height="5" fill="#999" stroke="none" /><path d="M16 24h3M22 24h6M16 28h3M22 28h6" stroke={P} /></S>,
    <S><Plan /><Pencil x={15} y={16} k={0.52} /></S>,
  ],
  [
    <S><Sheet x={4} y={0} w={27} /><path d="M0 9H8V4L18 12L8 20V15H0Z" fill={B} stroke={D} strokeWidth="1" /></S>,
    <S><Sheet x={2} y={0} w={27} /><path d="M14 18H22V14L33 22L22 30V26H14Z" fill={B} stroke={D} strokeWidth="1" /></S>,
    <S><Sheet x={4} y={7} w={28} h={24} /><rect x="0" y="0" width="13" height="20" fill={D} stroke="none" /><Clip x={-1} y={0} c={B} /></S>,
    <S><Floppy x={0} y={2} /><circle cx="23" cy="9" r="10" fill={D} stroke="none" /><circle cx="23" cy="9" r="8" stroke={B} /><path d="M15 9H31M23 1V17M18 3Q14 9 18 15M28 3Q32 9 28 15" stroke={B} strokeWidth="1.5" /></S>,
    <S><rect x="0" y="2" width="13" height="28" fill={W} stroke="none" /><rect x="18" y="2" width="13" height="28" fill="#c9c9c9" stroke="none" /><path d="M15.500 0V32" stroke={B} /><rect x="4" y="9" width="6" height="5" stroke="#e03c31" /><rect x="4" y="20" width="6" height="5" stroke="#3aa64a" /><rect x="21" y="13" width="6" height="4" stroke={P} /><rect x="21" y="22" width="6" height="4" stroke={P} /><Badge x={38} y={6} /></S>,
  ],
  [
    <S><path d="M28 14V1H1V30H16" /><circle cx="23" cy="22" r="5.500" /><path d="M27 27L31 31" stroke={T} /></S>,
    <S><path d="M9 30Q8 24 1 17Q-1 13 4 15L9 19L6 5Q7 2 9 5L13 15L14 2Q16 -2 18 2L18 15L22 4Q25 2 25 6L22 17L28 11Q32 9 30 13L24 24Q23 30 22 32H10Z" fill={W} stroke="none" /></S>,
    <S><path d="M16 0V8M16 24V32" stroke={B} /><path d="M12 9Q2 11 2 15Q3 22 16 22Q29 22 30 15Q30 10 20 9" stroke="#fff" strokeWidth="3" /><path d="M15 4L23 9L15 14Z" fill="#fff" stroke="none" /><circle cx="16" cy="16" r="2" fill={B} stroke="none" /></S>,
  ],
  [
    <S><rect x="2" y="0" width="24" height="28" fill={W} stroke="none" /><rect x="6" y="3" width="15" height="8" fill={B} stroke={D} strokeWidth="1" /><path d="M5 17h6M8 14v6M15 16h6M15 20h5M5 24h6" stroke={P} /><path d="M17 20L28 31" stroke={Y} strokeWidth="5" /><path d="M26 24L31 18" stroke="#fff" strokeWidth="3" /></S>,
    <S><Cursor x={0} y={8} k={1.100} /><rect x="14" y="14" width="18" height="18" fill="#f5f5f5" stroke="none" /><path d="M18 19h3M18 23h3M18 27h3M24 19h5M24 23h5M24 27h5" stroke="#3b82d6" /><path d="M16 0L8 8H13L10 14L20 6H15L20 0Z" fill={Y} stroke="none" /></S>,
    <S><Sheet x={0} y={0} w={26} h={28} /><circle cx="15" cy="16" r="13" fill={D} stroke="none" /><circle cx="16" cy="13" r="9" stroke={G} strokeWidth="4" /><circle cx="10" cy="21" r="7" stroke={G} strokeWidth="3" /><path d="M12 21H32M22 11V32M17 17H27V26H17Z" stroke="#fff" /></S>,
    <S><circle cx="7" cy="7" r="7" fill={G} stroke="none" /><circle cx="25" cy="25" r="7" fill={F} stroke="none" /><path d="M16 5H25V10" stroke="#fff" /><path d="M21 9h8l-4 6z" fill="#fff" stroke="none" /></S>,
    <S><Sheet x={3} y={0} w={26} h={28} /><path d="M10 8V20L2 32H24L16 20V8Z" fill={D} stroke="none" /><path d="M13 10V22" stroke={T} /><path d="M9 23H17L21 32H5Z" fill={Y} stroke="none" /></S>,
  ],
  [
    <S><Sheet x={4} y={6} w={27} h={24} /><Star x={9} y={7} r={9} /><circle cx="18" cy="23" r="6" fill={P} stroke={D} strokeWidth="5" /><circle cx="18" cy="23" r="6" fill={P} stroke="#fff" /><path d="M23 28L28 32" stroke={T} /></S>,
    <S><Sheet x={1} y={0} w={20} h={22} /><circle cx="10" cy="12" r="5.500" fill={P} stroke={D} strokeWidth="4" /><circle cx="10" cy="12" r="5.500" stroke="#fff" /><path d="M3 20V28H9" stroke="#fff" /><path d="M8 24l6 4-6 4z" fill="#fff" stroke="none" /><rect x="20" y="20" width="9" height="9" /><path d="M16 21V17H20M28 17H32V21M32 28V32H28M20 32H16V28" /></S>,
  ],
];

function AppHeader() {
  return (
    <header className="flex h-[105px] shrink-0 flex-col rounded-t-[10px] border-b-2 border-[#222831] bg-[#3c4453]">
      <div className="grid h-[42px] grid-cols-3 items-center">
        <div className="flex gap-[16px] pl-[16px]">
          <div className="flex size-[24px] items-center justify-center rounded-full bg-[#cfcfcf]"><div className="size-2 rounded-full bg-[#6a6a6a]" /></div>
          <div className="size-[24px] rounded-full bg-[#cfcfcf]" />
          <div className="size-[24px] rounded-full bg-[#cfcfcf]" />
        </div>
        <h1 className="pt-[2px] text-center text-[25.500px] leading-[40px] text-[#b4b6ba]">Drawing1.dwg</h1>
        <div className="mr-[2px] flex h-[42px] w-[237px] items-center justify-self-end rounded-tr-[8px] border-b-2 border-l-2 border-[#222831] bg-[#4c586b] pl-[8px] pr-[8px]">
          <svg viewBox="0 0 26 32" className="h-[32px] w-[26px]" fill="#7593e6" stroke="#000" strokeWidth="2"><path d="M1 30Q2 24 13 21Q24 24 25 30Z" /><path d="M13 1Q20 1 20 10Q19 20 13 21Q7 20 6 10Q6 1 13 1Z" /></svg>
          <div className="ml-[15px] flex-1 pt-[2px] text-[22.500px] text-[#f0f0f0]">k1a11220</div>
          <Caret />
        </div>
      </div>
      <div className="flex gap-[130px] pl-[579px] pt-[11px]">
        {toolGroups.map((g, i) => (
          <div key={i} className="flex gap-[34px]">{g.map((ic, j) => <div key={j}>{ic}</div>)}</div>
        ))}
      </div>
    </header>
  );
}

/* ---------- drawing area ---------- */
const GRID = 112.875;
const X0 = 762.5 - 368;
const Y0 = 1634.5 - 222;
const gx = Array.from({ length: 112 }, (_, i) => i - 17);
const gy = Array.from({ length: 82 }, (_, i) => i - 18);

function Drawing() {
  const fx = (x) => x - 368 + 0.5;
  const fy = (y) => y - 222 + 0.5;
  const lines = [
    [762, 912, 2478, 912], [762, 984, 1400, 984], [762, 1056, 2478, 1056], [762, 1128, 1400, 1128], [762, 1200, 2478, 1200],
    [762, 1272, 1575, 1272], [1304, 1344, 2478, 1344], [1304, 1418, 2478, 1418], [1304, 1490, 2478, 1490], [1575, 1562, 2478, 1562],
    [762, 1634, 2478, 1634], [762, 912, 762, 1634], [1034, 912, 1034, 1272], [1304, 1100, 1304, 1634], [1574, 1100, 1574, 1634],
    [1936, 1200, 1936, 1634], [2478, 912, 2478, 1634], [762, 984, 1034, 912], [762, 1056, 1034, 984],
  ];
  return (
    <svg viewBox="0 0 2520 1830" className="absolute inset-0 h-[1830px] w-[2520px]" fill="none" shapeRendering="auto">
      {gx.map((i) => {
        const x = Math.round(X0 + (i * GRID) / 5) + 0.5;
        return <path key={i} d={`M${x} 0V1830`} stroke={i % 5 ? "#262d38" : "#2f374a"} />;
      })}
      {gy.map((i) => {
        const y = Math.round(Y0 - (i * GRID) / 5) + 0.5;
        return <path key={i} d={`M0 ${y}H2520`} stroke={i % 5 ? "#262d38" : "#2f374a"} />;
      })}
      <path d={`M${fx(762)} 0V${fy(912)}`} stroke="#1f6b27" />
      <path d={`M${fx(2478)} ${fy(1634)}H2520`} stroke="#7c2026" />
      {lines.map(([a, b, c, d], i) => <path key={i} d={`M${fx(a)} ${fy(b)}L${fx(c)} ${fy(d)}`} stroke="#f2f2f2" strokeWidth="1.1" />)}
      <g stroke="#f5f5f5">
        <rect x={fx(754)} y={fy(1624)} width="18" height="18" />
        <path d={`M${fx(766)} ${fy(1500)}l12 12l12 -12M${fx(778)} ${fy(1512)}v13M${fx(872)} ${fy(1606)}l24 24M${fx(896)} ${fy(1606)}l-24 24`} />
      </g>
      <text x={fx(837)} y={fy(959)} fontSize="34" textLength="120" lengthAdjust="spacingAndGlyphs" fill="#fff" fontFamily="Liberation Sans, sans-serif">DRAWN</text>
    </svg>
  );
}

function ViewCube() {
  const dir = { fill: "#909395", fontSize: 37, fontWeight: 500, textAnchor: "middle", fontFamily: "Noto Sans CJK KR, sans-serif" };
  return (
    <div className="absolute left-[2215px] top-[18px] flex w-[280px] flex-col items-center">
      <svg viewBox="0 -10 280 290" className="h-[290px] w-[280px]">
        <circle cx="140" cy="135" r="108.500" fill="none" stroke="#484d53" strokeWidth="29" />
        <rect x="89" y="84" width="102" height="102" fill="#adafb1" />
        <rect x="108" y="103" width="64" height="64" fill="#9fa4a9" />
        <text x="140" y="145" fontSize="27" textLength="73" textAnchor="middle" fill="#5b636e" fontFamily="Noto Sans CJK KR, sans-serif">평면도</text>
        <text {...dir} x="140" y="38">북</text>
        <text {...dir} x="140" y="264">남</text>
        <text {...dir} x="26" y="150">서</text>
        <text {...dir} x="253" y="150">동</text>
      </svg>
      <div className="mt-[33px] flex h-[24px] w-[101px] items-center justify-between rounded-[7px] bg-[#66727a] pl-[8px] pr-[9px] text-[21px] leading-[24px] text-[#20272f]">
        WCS
        <svg viewBox="0 0 18 11" className="h-[11px] w-[18px]" fill="#7f9da0" stroke="#20272f" strokeWidth="1.500"><path d="M1 1H17L9 10Z" /></svg>
      </div>
    </div>
  );
}

function Canvas() {
  return (
    <div className="relative h-[1830px] overflow-hidden bg-[#222830]">
      <Drawing />
      <div className="absolute left-[30px] top-[9px] flex h-[30px] items-center text-[21px] font-medium leading-[30px] tracking-[-0.200px] text-[#a0a2a5]">
        <svg viewBox="0 0 12 12" className="mt-[3px] size-3" stroke="#a0a2a5" strokeWidth="1.500"><path d="M6 0V12M0 6H12" /></svg>
        <div className="ml-[24px] h-[27px] w-[2px] bg-[#a0a2a5]" />
        <div className="ml-[11px] mt-[2px] w-[74px]">평면도</div>
        <div className="h-[27px] w-[2px] bg-[#a0a2a5]" />
        <div className="ml-[10px] mt-[2px] whitespace-nowrap tracking-[0.300px]">2D 와이어프레임</div>
      </div>
      <ViewCube />
      <div className="absolute left-[762px] top-[1782px] flex h-[46px] w-[994px] items-center bg-[#3c4453]">
        <div className="flex h-full w-[77px] items-center gap-[5px] border-r border-[#222831] pl-[16px]">
          <svg viewBox="0 0 28 18" className="mt-[4px] h-[18px] w-[28px]" fill="none" stroke="#c0c1c3" strokeWidth="2"><path d="M1 1L10 6L1 11M13 15H26" /></svg>
          <Caret c="#a9a9a6" />
        </div>
        <div className="flex-1 pl-[9px] text-[22px] leading-[46px] tracking-[-0.600px] text-[#a4a7ab]">명령 입력</div>
        <svg viewBox="0 0 12 8" className="mr-[8px] h-[8px] w-[12px]"><path d="M0 8H12L6 0Z" fill="#a9a9a6" /></svg>
      </div>
    </div>
  );
}

function DocTabs() {
  return (
    <div className="flex h-[46px] shrink-0 items-stretch border-b-2 border-[#222831] bg-[#3c4453] text-[22px] leading-[44px]">
      <div className="flex w-[49px] items-center justify-center border-x-2 border-[#222831] pr-[2px]">
        <S className="size-[28px]" vb="0 0 28 28"><rect x="0" y="0" width="14" height="14" fill={F} stroke="none" /><rect x="16" y="2" width="12" height="12" fill={W} stroke="none" /><rect x="2" y="16" width="12" height="12" fill={W} stroke="none" /><rect x="16" y="16" width="12" height="12" fill={W} stroke="none" /></S>
      </div>
      <div className="flex w-[46px] items-center justify-center border-r-2 border-[#222831]"><S className="size-[22px]" vb="0 0 22 22"><path d="M11 0V22M0 11H22" /></S></div>
      <div className="w-[259px] border-r-2 border-[#222831] pl-[7px] tracking-[-0.500px] text-[#b3b6ba]">block*</div>
      <div className="w-[258px] border-r-2 border-[#222831] bg-[#4c586b] pl-[6px] font-medium tracking-[-0.300px] text-white">Drawing1*</div>
    </div>
  );
}

/* ---------- right inspector ---------- */
const ExitIcon = () => <S className="h-[28px] w-[22px]" vb="0 0 22 28"><path d="M8 9V1H21V27H8V19M5 14H12" strokeWidth="2" stroke="#f0f0f0" /><path d="M0 14l6-5v10z" fill="#f0f0f0" stroke="none" /></S>;
const Swatch = () => <div className="size-[18px] shrink-0 border-2 border-black bg-white" />;
const fieldBase = "flex items-center rounded-[3px] border-2 border-[#2e3c41] bg-[#4e596b] text-[#f7f7f7]";

const layerTools = [
  <S><Stack a={F} y={6} /><circle cx="16" cy="6" r="6" fill={W} stroke={D} strokeWidth="1" /></S>,
  <S><Stack y={-1} /><path d="M17 20L27 31" stroke={Y} strokeWidth="6" /><path d="M22 18L32 27M28 19L24 25" stroke="#fff" strokeWidth="3" /></S>,
  <S><Stack y={6} /><path d="M0 8L9 1V5Q18 4 20 15Q15 10 9 11V15Z" fill={B} stroke={D} strokeWidth="1" /></S>,
  <S><Stack c={F} /><path d="M27 18L17 30" stroke={D} strokeWidth="6" /><path d="M27 18L19 27" stroke="#fff" /><path d="M14 32V23L21 29Z" fill="#fff" stroke="none" /></S>,
  <S><Stack c={F} /><path d="M16 30L27 18" stroke={D} strokeWidth="6" /><path d="M16 31L25 21" stroke="#fff" /><path d="M29 16V25L22 19Z" fill="#fff" stroke="none" /></S>,
  <S><Layer y={0} /><circle cx="23" cy="20" r="10" fill={D} stroke="none" /><Snow x={23} y={20} c={C} /></S>,
  <S><Layer y={0} /><circle cx="24" cy="17" r="8" fill={D} stroke="none" /><Bulb x={24} y={17} c={C} /></S>,
  <S><Layer y={0} /><rect x="14" y="9" width="18" height="22" fill={D} stroke="none" /><Lock x={16} y={9} k={0.95} c={C} /></S>,
  <S><Layer y={0} /><rect x="12" y="9" width="18" height="22" fill={D} stroke="none" /><Lock x={14} y={9} k={0.95} c={Y} open /></S>,
];

const props = [
  { l: "색상", v: "도면층별", pre: "swatch" },
  { l: "도면층", v: "0" },
  { l: "선종류", v: "ByLayer", pre: "line" },
  { l: "선종류 축척", v: "1.0000", text: 1 },
  { l: "선가중치", v: "ByLayer" },
  { l: "투명도", kind: "slider" },
  { l: "문자 스타일", v: "Standard" },
  { l: "치수 스타일", v: "Standard" },
  { l: "다중 지시선 스···", v: "Standard", long: 1 },
  { l: "테이블 스타일", v: "Standard" },
  { l: "주석 축척", v: "1:1" },
  { l: "문자 높이", v: "0.2000", kind: "height" },
  { l: "플롯 스타일", v: "색상별" },
  { l: "플롯 스타일 테···", v: "없음", long: 1 },
  { l: "플롯 스타일 부···", v: "모형", off: 1, long: 1 },
  { l: "플롯 테이블 형식", v: "사용할 수 없음", off: 1, long: 1 },
];

function PropField({ p }) {
  if (p.kind === "slider")
    return (
      <div className="flex w-[226px] items-center justify-between pl-[6px]">
        <div className="relative flex h-[34px] w-[136px] items-center justify-end border-2 border-[#2e3c41] bg-[#48546a] pr-[5px] text-[22px] font-semibold text-[#f7f7f7]">
          <div className="absolute bottom-[2px] left-[62px] h-[11px] w-px bg-[#8a9099]" />
          <svg viewBox="0 0 4 26" className="absolute left-0 top-[2px] h-[26px] w-1" fill="#5c94ee"><path d="M0 0H4L0 4ZM0 26H4L0 22Z" /></svg>
          0
        </div>
        <div className={`${fieldBase} h-[36px] w-[78px] justify-between pl-[14px] pr-[8px]`}>
          <S className="h-[22px] w-[26px]" vb="0 0 30 27"><Stack a={F} /></S><Caret />
        </div>
      </div>
    );
  if (p.kind === "height")
    return (
      <div className="flex w-[226px] gap-[4px]">
        <div className={`${fieldBase} h-[37px] w-[182px] pl-[6px] pt-[2px] text-[22px] font-semibold tracking-[0.200px]`}>{p.v}</div>
        <div className="flex size-[37px] items-center justify-center border border-[#2e3c41] bg-[#3b4550]">
          <S><path d="M1 0V28M30 0V12" /><HArrow x1={4} x2={28} y={6} c={B} s={3} /><path d="M14 24H32M23 15V32M18 20H28V28H18Z" strokeWidth="1.600" /></S>
        </div>
      </div>
    );
  const style = p.off ? "flex items-center rounded-[3px] border border-[#3e4754] bg-[#434c5c] text-[#7f8794] font-normal pl-[6px] pt-[2px]" : `${fieldBase} font-semibold ${p.text ? "pl-[7px] pt-[2px]" : "pl-[12px]"}`;
  return (
    <div className={`${style} h-[37px] w-[226px] whitespace-nowrap pr-[8px] text-[21.500px]`}>
      {p.pre === "swatch" && <><div className="w-[4px]" /><Swatch /><div className="w-[22px]" /></>}
      {p.pre === "line" && <div className="ml-[1px] mr-[28px] h-[2px] w-[64px] shrink-0 bg-white" />}
      <div className={`flex-1 ${/[가-힣]/.test(p.v) ? "tracking-[-0.700px]" : ""}`}>{p.v}</div>
      {!p.off && !p.text && <Caret />}
    </div>
  );
}

function RightPanel() {
  return (
    <aside className="flex w-[472px] shrink-0 flex-col bg-[#3c4453]">
      <div className="flex h-[44px] shrink-0">
        <div className="flex w-[103px] items-center justify-center pt-[4px]">
          <S><g transform="scale(.85)"><Stack /></g><circle cx="24" cy="22" r="8" fill={D} stroke="none" /><circle cx="24" cy="22" r="6.500" fill={W} stroke="none" /><path d="M24 17v2M24 21v5" stroke={D} /></S>
        </div>
        <div className="flex h-[46px] w-[106px] items-center justify-center border-b-2 border-l-2 border-[#222831] bg-[#30333e]"><S><Sheet x={2} y={7} w={30} h={23} /><rect x="0" y="0" width="12" height="21" fill="#30333e" stroke="none" /><Clip x={-1} y={1} /></S></div>
        <div className="flex h-[46px] w-[105px] items-center justify-center border-b-2 border-l-2 border-[#222831] bg-[#30333e]">
          <S className="h-[26px] w-[28px]" vb="0 0 28 26"><rect x="0" y="0" width="28" height="26" fill={W} stroke="none" /><rect width="28" height="5" fill="#aaa" stroke="none" />{[4, 11, 18].map((x) => [8, 14].map((y) => <rect key={`${x}-${y}`} x={x} y={y} width="6" height="5" fill="#5a5d66" stroke="none" />))}<path d="M4 22H24" stroke="#888" /></S>
        </div>
        <div className="h-[46px] w-[110px] border-x-2 border-b-2 border-[#222831] bg-[#30333e]" />
        <div className="flex h-[46px] flex-1 items-center justify-center border-b-2 border-[#222831]"><svg viewBox="0 0 14 10" className="mr-[-1px] h-[10px] w-[14px]" fill="none" stroke="#a5a8ae" strokeWidth="1.500"><path d="M1 0L6 5L1 10M8 0L13 5L8 10" /></svg></div>
      </div>
      <div className="flex h-[67px] shrink-0 justify-between pl-[20px] pr-[22px] pt-[5px]">
        <h2 className="text-[23px] font-medium leading-[28px] tracking-[-0.500px] text-[#f0f0f0]">도면층</h2>
        <ExitIcon />
      </div>
      <div className="flex h-[55px] shrink-0 gap-[16px] pl-[28px]">{layerTools.map((t, i) => <div key={i}>{t}</div>)}</div>
      <div className={`${fieldBase} ml-[23px] h-[49px] w-[430px] shrink-0 pl-[19px] pr-[8px]`}>
        <div className="size-[16px] rounded-full bg-[#d9d9d9]" />
        <S className="ml-[18px] h-[20px] w-[14px]" vb="0 0 14 20"><Lock x={0} y={0} c="#6d7684" d="#4e596b" /></S>
        <S className="ml-[18px] size-[18px]" vb="0 0 18 18"><Snow x={9} y={9} c="#6d7684" /></S>
        <div className="ml-[15px]"><Swatch /></div>
        <div className="ml-[24px] flex-1 text-[22px] font-semibold">0</div>
        <Caret />
      </div>
      <div className={`${fieldBase} ml-[23px] mt-[7px] h-[49px] w-[430px] shrink-0 pl-[11px] pr-[8px]`}>
        <div className="flex-1 text-[21px] font-medium tracking-[-0.100px]">저장되지 않은 도면층 상태</div>
        <Caret />
      </div>
      <div className="flex h-[74px] shrink-0 items-start border-b-2 border-[#222831] pl-[30px] pt-[11px]">
        <svg viewBox="0 0 14 18" className="mt-[8px] h-[18px] w-[14px]"><path d="M0 0V18L14 9Z" fill="#8f8f8f" /></svg>
        <div className="ml-[24px] text-[21px] leading-[30px] tracking-[-0.100px] text-[#d3d4d6]">도면층 리스트 표시</div>
      </div>
      <div className="flex h-[51px] shrink-0 items-start pl-[20px] pr-[18px]">
        <h2 className="w-[220px] pt-[4px] text-[23px] font-medium leading-[28px] tracking-[-0.500px] text-[#f0f0f0]">특성</h2>
        <div className="flex h-[26px] border-x-2 border-b-2 border-[#2d333f] text-center text-[16.500px] font-medium leading-[24px] tracking-[-0.300px]">
          <div className="w-[55px] border-r-2 border-[#2d333f] text-[#7d828d]">전체</div>
          <div className="w-[61px] bg-[#4c586b] text-[#f5f5f5]">내 항목</div>
        </div>
        <div className="ml-auto flex gap-[21px]">
          <S className="h-[26px] w-[29px]" vb="0 0 29 26"><path d="M12 24H1V1H20V8M5 7H16M5 12H14M5 17H11" stroke="#f0f0f0" /><path d="M11 25L13 18L22 8L28 14L19 23Z" fill={W} stroke={D} strokeWidth="1" /></S>
          <ExitIcon />
        </div>
      </div>
      <div className="ml-[23px] flex h-[42px] w-[426px] shrink-0 items-center rounded-[3px] border-2 border-[#3e4754] bg-[#434c5c] pl-[11px] pr-[7px] text-[21px] tracking-[-0.300px] text-[#7f8794]">
        <div className="flex-1">모형 공간</div><Caret c="#7f8794" />
      </div>
      <div className="mt-[11px] flex flex-col">
        {props.map((p) => (
          <div key={p.l} className="flex h-[46px] items-center">
            <div className={`mb-[2px] whitespace-nowrap text-right text-[21px] tracking-[-0.300px] text-[#d3d4d6] ${p.long ? "w-[209px]" : "w-[201px]"}`}>{p.l}</div>
            <div className={p.long ? "ml-[11px]" : "ml-[19px]"}><PropField p={p} /></div>
          </div>
        ))}
      </div>
    </aside>
  );
}

/* ---------- status bar ---------- */
const Person = () => <path d="M16 0Q20 8 19 14L31 31L21 28L16 22L11 28L1 31L13 14Q12 8 16 0Z" fill="#fff" stroke="none" />;
const status = [
  [1, <S><path d="M9 1V31M17 1V31M25 1V31M1 8H32M1 16H32M1 24H32" stroke="#fff" /></S>],
  [0, <S><path d="M4 5H8M14 5H18M24 5H28M4 16H8M14 16H18M24 16H28M4 27H8M14 27H18M24 27H28" strokeWidth="4" /></S>],
  [0, <S><path d="M2 0V31H32M2 21H11V31" /></S>],
  [0, <S><circle cx="13" cy="18" r="12" /><path d="M32 18H14L28 2" /></S>],
  [1, <S><path d="M0 11H14M7 4V18" stroke="#fff" /><rect x="12" y="20" width="20" height="9" fill="#fff" stroke="none" /><path d="M16 21V26" stroke="#5f89b8" /></S>],
  [0, <S><path d="M0 4H12M16 4H32" strokeWidth="3" /><path d="M0 14H15" strokeWidth="6" /><path d="M18 12H32M18 23H32" /><path d="M0 26H16" strokeWidth="9" /></S>],
  [1, <S><defs><pattern id="ck" width="8" height="8" patternUnits="userSpaceOnUse"><path d="M0 0H4V4H0ZM4 4H8V8H4Z" fill="#fff" /></pattern></defs><rect x="2" y="2" width="28" height="28" stroke="#fff" /><rect x="6" y="6" width="20" height="20" fill="url(#ck)" stroke="none" /></S>],
  [1, <S><path d="M5 1H1V27H5M20 1H24V9" stroke="#fff" /><rect x="8" y="5" width="9" height="7" stroke="#fff" /><circle cx="12" cy="20" r="5" stroke="#fff" /><Cursor x={18} y={13} k={0.9} /></S>],
  [1, <S><path d="M26 2L1 30H32" stroke="#fff" /><circle cx="15" cy="14" r="3" fill="#fff" stroke="none" /></S>],
  [1, <S><rect x="1" y="1" width="8" height="9" stroke="#fff" /><path d="M12 5H32V31H6V13" stroke="#fff" /></S>],
  [1, <S><Person /><circle cx="27" cy="8" r="6" fill="#fff" stroke="none" /></S>],
  [0, <S><g opacity=".85"><Person /></g><path d="M29 4L22 12H26L23 18L32 10H28L32 4Z" fill={Y} stroke="none" /></S>],
  [0, <S><g opacity=".85"><Person /></g></S>],
];

function BottomBar() {
  return (
    <div className="flex h-[48px] shrink-0 border-b-2 border-t-2 border-[#222831] bg-[#3c4453] text-[21px] leading-[44px] text-[#b3b6ba]">
      <div className="ml-[2px] w-[119px] border-r-2 border-[#222831] bg-[#4c586b] pr-[7px] text-center font-bold text-white">모형</div>
      <div className="flex w-[46px] items-center justify-center border-r-2 border-[#222831]"><S className="size-[22px]" vb="0 0 22 22"><path d="M11 0V22M0 11H22" /></S></div>
      <div className="w-[118px] border-r-2 border-[#222831] text-center tracking-[-0.500px]">배치1</div>
      <div className="w-[118px] border-r-2 border-[#222831] pr-[2px] text-center tracking-[-0.500px]">배치2</div>
      <div className="ml-auto flex items-center border-l-2 border-[#222831] pl-[7px]">
        <div className="w-[313px] whitespace-pre font-['Noto_Sans'] text-[22.500px] tracking-[0.800px]">{"51.7833,  120.1595, 0.0000"}</div>
        <div className="flex gap-1">
          {status.map(([on, ic], i) => <div key={i} className={`flex size-[40px] items-center justify-center ${on ? "bg-[#688fbd]" : ""}`}>{ic}</div>)}
        </div>
        <div className="ml-[1px] w-[42px] font-['Noto_Sans'] text-[24px] text-[#b9bbbe]">1:1</div>
        <Caret />
        <div className="ml-[16px]"><S><rect x="1" y="1" width="12" height="12" /><circle cx="25" cy="14" r="6" /><path d="M13 18L20 31H7Z" /></S></div>
        <Gear className="ml-[14px] mr-[15px] size-[31px]" c={W} />
      </div>
    </div>
  );
}

/* ---------- attribute definition dialog ---------- */
const Row = ({ label, w, h, children, muted, shift = "pt-0" }) => (
  <div className={`flex items-center ${h}`}>
    <div className={`${w} ${shift} shrink-0 whitespace-nowrap text-right text-[25px] tracking-[-0.400px] ${muted ? "text-[#8a8a8a]" : "text-[#151515]"}`}>{label}</div>
    {children}
  </div>
);
const input = "flex h-[42px] items-center border border-[#b3b3b3] bg-white px-[7px] text-[25px] whitespace-nowrap";
const btn = "flex h-[39px] w-[38px] items-center justify-center rounded-[8px] border border-[#c8c8c8] bg-white shadow-[0_1px_1px_rgba(0,0,0,0.25)]";
const Select = ({ v }) => (
  <div className="ml-[11px] flex h-[40px] w-[245px] items-center overflow-hidden rounded-[7px] bg-white pl-[17px] text-[25px] text-[#1c1c1c] shadow-[0_1px_2px_rgba(0,0,0,0.4)]">
    <div className="flex-1 pt-[2px]">{v}</div>
    <div className="flex h-full w-[32px] items-center justify-center bg-gradient-to-b from-[#6ea6f8] to-[#1e69f7]">
      <svg viewBox="0 0 16 26" className="h-[26px] w-[16px]" fill="none" stroke="#fff" strokeWidth="2.800"><path d="M2 9L8 2L14 9M2 17L8 24L14 17" /></svg>
    </div>
  </div>
);
const PickIcon = () => (
  <S className="size-[30px]" vb="0 0 30 30"><path d="M8 9Q0 14 3 20Q8 26 16 19" stroke="#777" /><rect x="9" y="2" width="13" height="13" fill="#74c285" stroke="#5fae71" strokeWidth="1" /><Cursor x={19} y={13} k={0.75} s="#444" /></S>
);

function Dialog() {
  const box = "rounded-[7px] border border-[#d9d9d9] bg-[#e2e2e2]";
  return (
    <div className="absolute left-[1190px] top-[355px] flex h-[820px] w-[980px] flex-col rounded-[10px] bg-[#ebebeb] text-[#222] shadow-[0_30px_80px_20px_rgba(0,0,0,0.38),0_0_2px_rgba(0,0,0,0.6)]">
      <div className="h-[43px] shrink-0 rounded-t-[10px] border-b border-[#ababab] bg-gradient-to-b from-[#e6e6e6] to-[#cfcfcf] pr-[3px] text-center text-[25px] leading-[43px] tracking-[-0.200px] text-[#444]">속성 정의</div>
      <div className="px-[40px]">
        <div className="h-[68px] pl-[22px] pt-[39px] text-[21px] leading-[30px] tracking-[-0.300px]">속성</div>
        <div className={`${box} h-[199px] pt-[15px]`}>
          <Row label="태그:" w="w-[216px]" h="h-[56px]" shift="pt-[6px]">
            <div className={`${input} ml-[16px] w-[467px] border-[#6f93d4] pt-[2px] text-[#bdbdbd] tracking-[-0.200px] shadow-[0_0_0_6px_#85a7e6]`}>속성의 표시 이름</div>
          </Row>
          <Row label="프롬프트:" w="w-[216px]" h="h-[56px]" shift="pt-[6px]">
            <div className={`${input} ml-[16px] w-[467px] pt-[2px] text-[#bdbdbd] tracking-[-0.200px]`}>삽입 시 표시되는 문자</div>
          </Row>
          <Row label="기본값:" w="w-[216px]" h="h-[56px]" shift="pt-[6px]">
            <div className={`${input} ml-[16px] w-[414px] pt-[2px] text-[#bdbdbd] tracking-[-0.200px]`}>권장 값</div>
            <div className={`${btn} ml-[13px]`}><S className="size-[30px]"><ListField d="#555" /><rect x="9" y="24" width="22" height="7" fill="#f5f5f5" stroke="#666" strokeWidth="1.500" /></S></div>
          </Row>
        </div>
        <div className="h-[45px] pl-[22px] pt-[16px] text-[21px] leading-[30px] tracking-[-0.200px]">문자 설정</div>
        <div className={`${box} h-[351px] pt-[15px]`}>
          <Row label="문자 스타일:" w="w-[406px]" h="h-[52px]" shift="pt-[2px]"><Select v="Standard" /></Row>
          <Row label="자리맞추기:" w="w-[406px]" h="h-[52px]" shift="pt-[2px]"><Select v="왼쪽" /></Row>
          <Row label="" w="w-[406px]" h="h-[40px]">
            <div className="ml-[11px] size-[28px] rounded-[6px] border border-[#c4c4c4] bg-white shadow-[0_1px_1px_rgba(0,0,0,0.15)]" />
            <div className="ml-[8px] pt-[2px] text-[25px] tracking-[-0.900px]">주석</div>
          </Row>
          <Row label="문자 높이:" w="w-[406px]" h="h-[66px]" shift="pt-[5px]">
            <div className={`${input} ml-[12px] w-[190px] pt-[3px] text-black`}>0.2000</div>
            <div className={`${btn} mb-[3px] ml-[15px]`}><PickIcon /></div>
          </Row>
          <Row label="문자 회전:" w="w-[406px]" h="h-[54px]" shift="pt-[9px]">
            <div className={`${input} ml-[12px] w-[93px] pt-[3px] text-black`}>0</div>
            <div className="mb-[4px] ml-[8px] flex size-[33px] justify-center rounded-full border border-[#cfcfcf] bg-white pt-[2px] shadow-[0_1px_2px_rgba(0,0,0,0.35)]"><div className="size-[12px] rounded-full bg-[#4a4a4a]" /></div>
          </Row>
          <Row label="여러 줄 문자 폭:" w="w-[406px]" h="h-[58px]" shift="pt-[11px]" muted>
            <div className={`${input} ml-[12px] w-[190px] border-[#c8c8c8] pt-[3px] text-[#8a8a8a]`}>0.0000</div>
            <div className={`${btn} ml-[15px] opacity-50`}><PickIcon /></div>
          </Row>
        </div>
        <div className="flex h-[49px] items-center pl-[6px] pt-[13px]">
          <svg viewBox="0 0 14 18" className="mt-[1px] h-[18px] w-[14px]"><path d="M0 0V18L14 9Z" fill="#8c8c8c" /></svg>
          <div className="ml-[12px] text-[21px] leading-[30px] tracking-[-0.200px]">고급 옵션 표시</div>
        </div>
        <div className="flex h-[40px] items-start">
          <div className="flex size-[39px] items-center justify-center rounded-full bg-white text-[26px] font-medium shadow-[0_1px_3px_rgba(0,0,0,0.45)]">?</div>
          <div className="ml-auto flex h-[40px] w-[164px] items-center justify-center rounded-[7px] border border-[#cbcbcb] bg-white pt-[2px] text-[25px] tracking-[-0.500px] text-black shadow-[0_1px_1px_rgba(0,0,0,0.25)]">취소</div>
          <div className="ml-[27px] mr-[1px] flex h-[40px] w-[166px] items-center justify-center rounded-[7px] bg-gradient-to-b from-[#6ea3f6] to-[#2167f6] pt-[2px] text-[25px] tracking-[-0.500px] text-white">저장</div>
        </div>
      </div>
    </div>
  );
}

export default function App() {
  return (
    <div className="relative flex h-[2100px] w-[3360px] flex-col overflow-hidden bg-[#8b8d92] font-['Inter','Noto_Sans_CJK_KR',sans-serif]">
      <MenuBar />
      <BackWindow />
      <AppHeader />
      <div className="flex min-h-0 flex-1">
        <LeftPanel />
        <div className="flex flex-1 flex-col">
          <div className="flex h-[1876px] shrink-0">
            <div className="flex w-[2520px] flex-col">
              <DocTabs />
              <Canvas />
            </div>
            <RightPanel />
          </div>
          <BottomBar />
        </div>
      </div>
      <Dialog />
    </div>
  );
}
